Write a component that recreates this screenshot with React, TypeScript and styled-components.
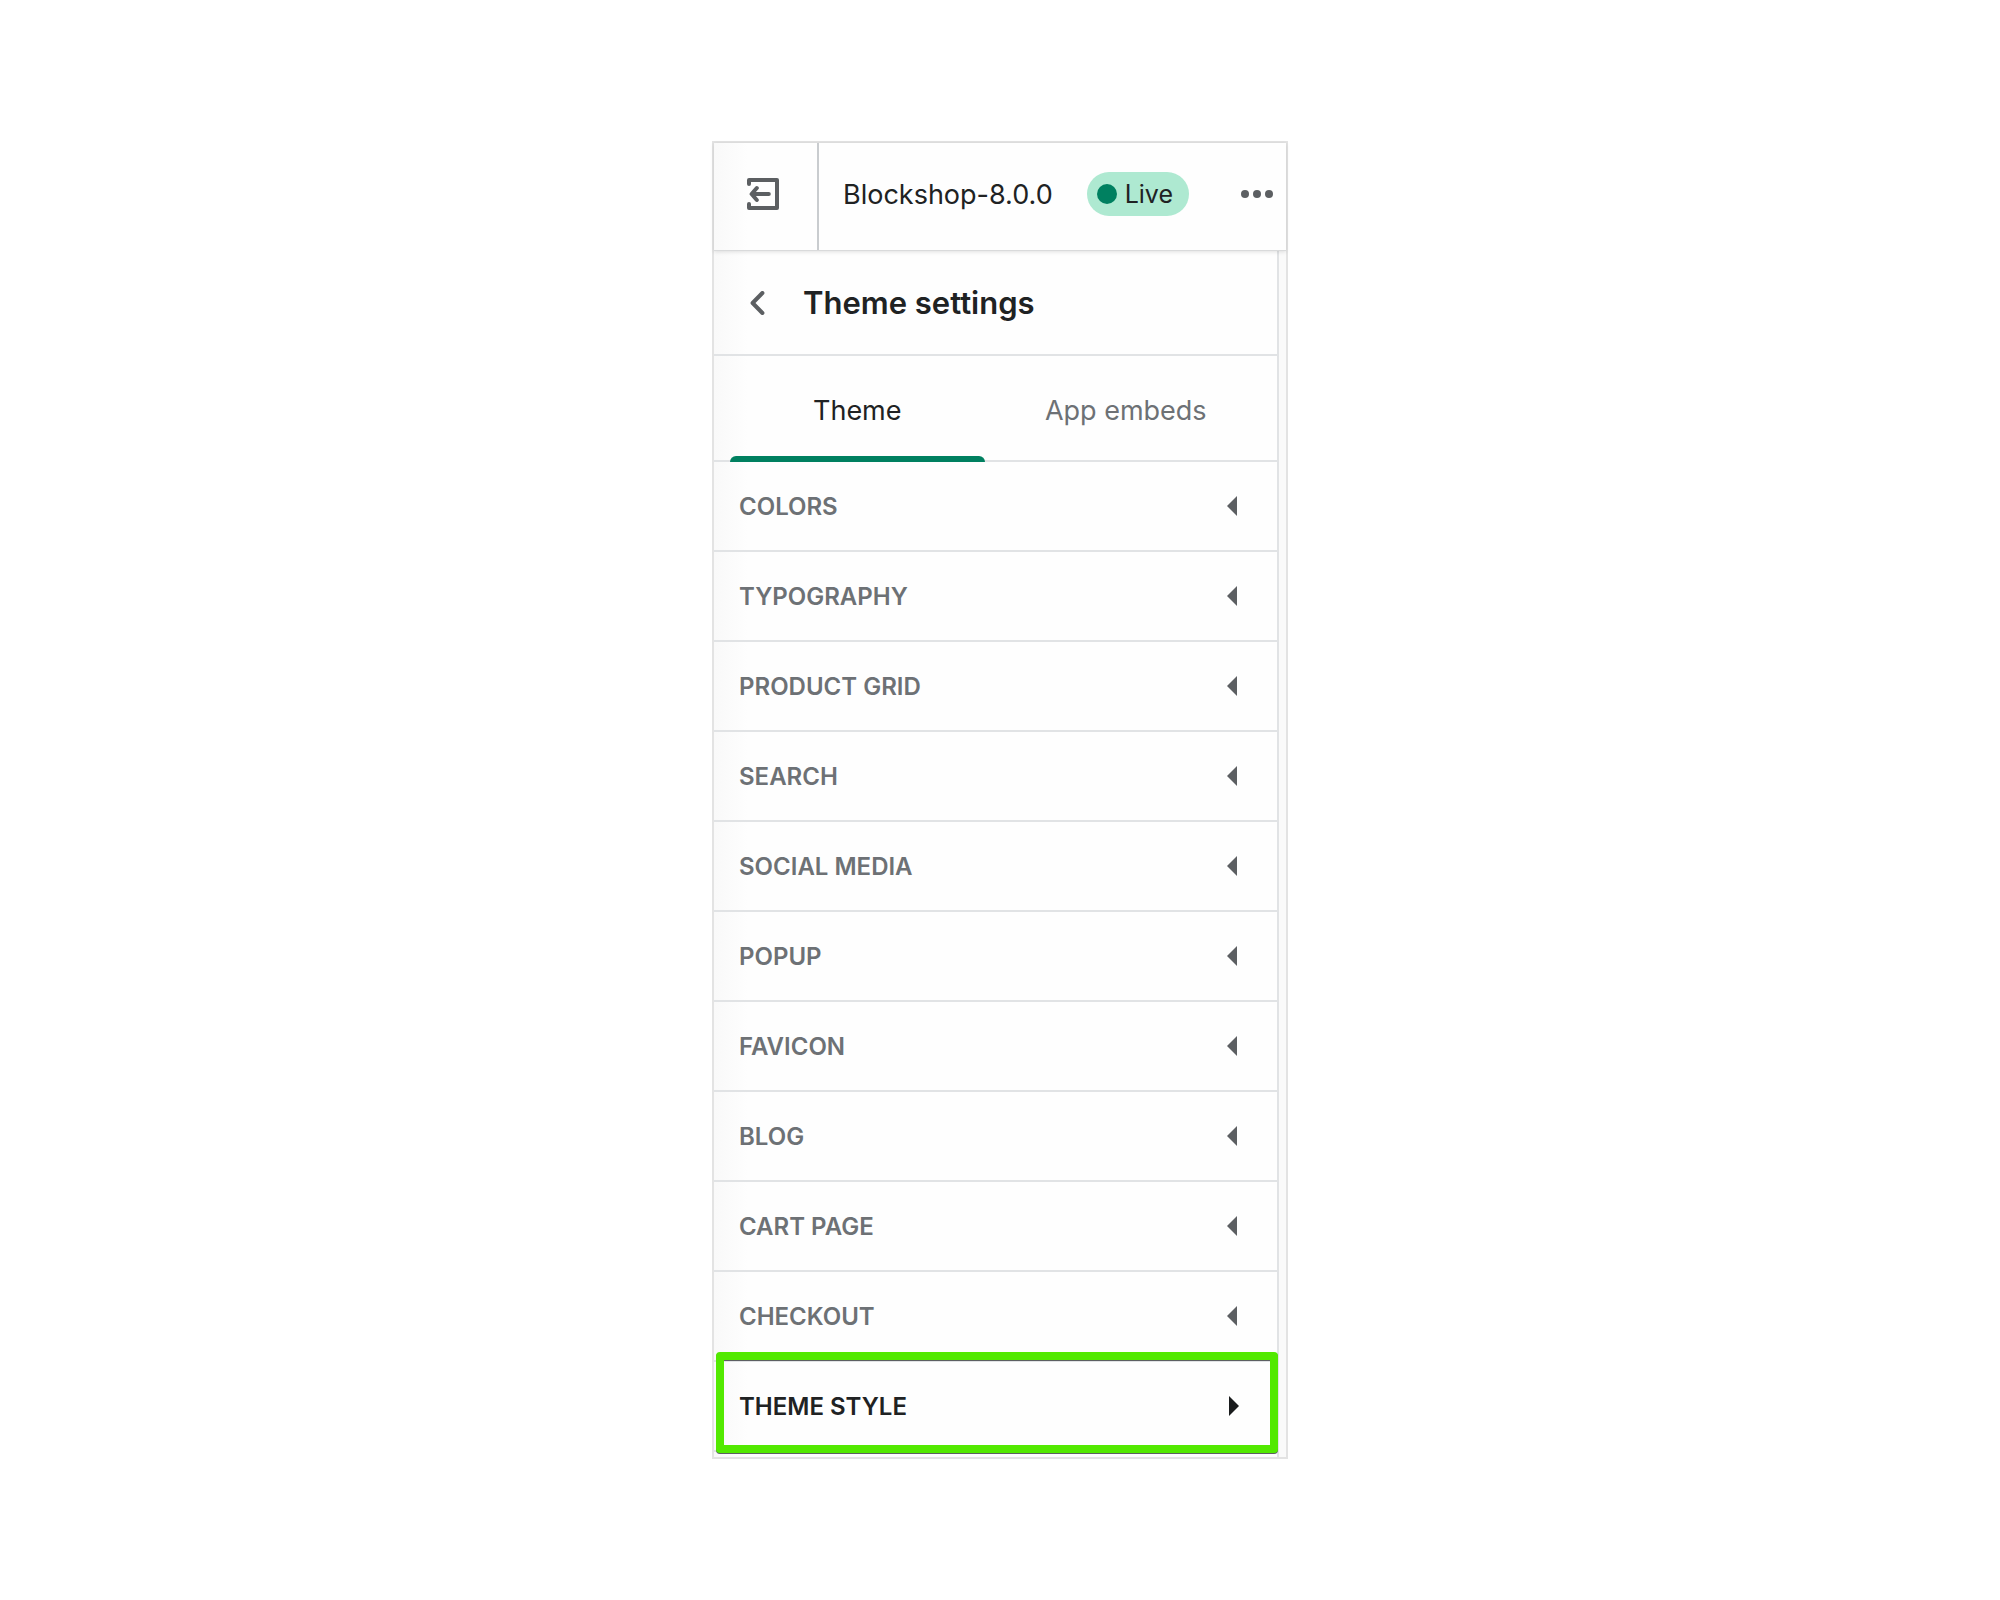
import React, { useState } from "react";
import styled, { createGlobalStyle } from "styled-components";

const color = {
  text: "#202223",
  subdued: "#6d7175",
  icon: "#5c5f62",
  line: "#e1e3e5",
  frame: "#e3e3e3",
  green: "#008060",
  badge: "#aee9d1",
  highlight: "#52e900",
};

const GlobalStyle = createGlobalStyle`
  *, *::before, *::after { box-sizing: border-box; }
  body {
    margin: 0;
    background: #fff;
    color: ${color.text};
    font-family: Inter, "Liberation Sans", sans-serif;
  }
  button {
    margin: 0;
    padding: 0;
    border: 0;
    background: none;
    color: inherit;
    font: inherit;
    cursor: pointer;
  }
  svg { display: block; }
`;

const Page = styled.main`
  min-height: 100vh;
  display: flex;
  align-items: center;
  justify-content: center;
`;

const Panel = styled.section`
  width: 100%;
  max-width: 576px;
  border: 2px solid ${color.frame};
  background: linear-gradient(to right, #f9f9f9, #fefefe 34px);
`;

const Header = styled.header`
  position: relative;
  display: flex;
  border-bottom: 1px solid #d9dadb;
  box-shadow: 0 1px 4px rgba(0, 0, 0, 0.12);
`;

const ExitButton = styled.button`
  flex: none;
  display: flex;
  width: 105px;
  padding: 35px 0 40px 33px;
  border-right: 2px solid #c9cccf;
`;

const HeaderBar = styled.div`
  flex: 1;
  min-width: 0;
  display: flex;
  align-items: center;
  padding: 0 13px 5px 24px;
`;

const ThemeName = styled.span`
  flex: 1;
  padding-top: 2px;
  font-size: 27px;
  line-height: 40px;
  white-space: nowrap;
`;

const Badge = styled.span`
  display: flex;
  align-items: center;
  gap: 8px;
  height: 44px;
  padding: 0 16px 0 10px;
  border-radius: 22px;
  background: ${color.badge};
  font-size: 25px;
  line-height: 32px;
`;

const Dot = styled.span`
  width: 20px;
  height: 20px;
  border-radius: 50%;
  background: ${color.green};
`;

const MoreButton = styled.button`
  margin-left: 52px;
  color: ${color.icon};
`;

const Body = styled.div`
  margin-right: 7px;
  border-right: 2px solid ${color.line};
  box-shadow: 7px 0 0 #fafafa;
`;

const TitleRow = styled.div`
  display: flex;
  align-items: center;
  gap: 37px;
  height: 105px;
  padding-left: 36px;
  border-bottom: 2px solid ${color.line};
`;

const BackButton = styled.button`
  color: ${color.icon};
`;

const Title = styled.h1`
  margin: 0;
  font-size: 31px;
  font-weight: 600;
  line-height: 40px;
`;

const Tabs = styled.div`
  display: flex;
  height: 106px;
  padding: 0 17px 0 9px;
  border-bottom: 2px solid ${color.line};
`;

const Tab = styled.button<{ $active: boolean }>`
  position: relative;
  flex: 1;
  height: 106px;
  padding-top: 2px;
  font-size: 27px;
  color: ${(p) => (p.$active ? color.text : color.subdued)};

  &::after {
    content: "";
    position: absolute;
    inset: auto 7px 0;
    height: 6px;
    border-radius: 6px 6px 0 0;
    background: ${(p) => (p.$active ? color.green : "transparent")};
  }
`;

const List = styled.ul`
  margin: 0;
  padding: 0 0 5px;
  list-style: none;
`;

const Item = styled.li<{ $highlight: boolean }>`
  position: relative;
  border-bottom: 2px solid ${color.line};

  &::after {
    content: "";
    display: ${(p) => (p.$highlight ? "block" : "none")};
    position: absolute;
    inset: -10px -1px -3px 2px;
    border: 8px solid ${color.highlight};
    border-radius: 4px;
    filter: drop-shadow(0 1px 0 ${color.icon});
    pointer-events: none;
  }
`;

const ItemButton = styled.button<{ $highlight: boolean }>`
  display: flex;
  align-items: center;
  justify-content: space-between;
  width: 100%;
  height: 88px;
  padding: 0 38px 0 25px;
  font-size: 24px;
  font-weight: 600;
  color: ${(p) => (p.$highlight ? color.text : color.subdued)};
`;

const ExitIcon = () => (
  <svg width="32" height="32" viewBox="0 0 32 32" fill="none" stroke={color.icon} strokeWidth="4" strokeLinecap="round" strokeLinejoin="round" aria-hidden="true">
    <path d="M2 6V2H30V30H2V26" />
    <path d="M21.8 16H5M9.8 10L4.6 16L9.8 22" />
  </svg>
);

const BackIcon = () => (
  <svg width="16" height="24" viewBox="0 0 16 24" fill="none" stroke="currentColor" strokeWidth="4" strokeLinecap="round" strokeLinejoin="round" aria-hidden="true">
    <path d="M12.4 2L2.6 12L12.4 22" />
  </svg>
);

const MoreIcon = () => (
  <svg width="32" height="8" viewBox="0 0 32 8" fill="currentColor" aria-hidden="true">
    <circle cx="4" cy="4" r="4" />
    <circle cx="16" cy="4" r="4" />
    <circle cx="28" cy="4" r="4" />
  </svg>
);

const Caret = ({ right }: { right: boolean }) => (
  <svg width="12" height="20" viewBox="0 0 12 20" aria-hidden="true">
    {right ? <path d="M2 0L12 10L2 20Z" fill="#1a1c1d" /> : <path d="M10 0L0 10L10 20Z" fill={color.icon} />}
  </svg>
);

const tabs = ["Theme", "App embeds"];

const sections = [
  "COLORS",
  "TYPOGRAPHY",
  "PRODUCT GRID",
  "SEARCH",
  "SOCIAL MEDIA",
  "POPUP",
  "FAVICON",
  "BLOG",
  "CART PAGE",
  "CHECKOUT",
  "THEME STYLE",
];

export default function App() {
  const [activeTab, setActiveTab] = useState("Theme");
  const [selected, setSelected] = useState("THEME STYLE");

  return (
    <>
      <GlobalStyle />
      <Page>
        <Panel>
          <Header>
            <ExitButton aria-label="Exit">
              <ExitIcon />
            </ExitButton>
            <HeaderBar>
              <ThemeName>Blockshop-8.0.0</ThemeName>
              <Badge>
                <Dot />
                Live
              </Badge>
              <MoreButton aria-label="More actions">
                <MoreIcon />
              </MoreButton>
            </HeaderBar>
          </Header>
          <Body>
            <TitleRow>
              <BackButton aria-label="Back">
                <BackIcon />
              </BackButton>
              <Title>Theme settings</Title>
            </TitleRow>
            <Tabs role="tablist">
              {tabs.map((tab) => (
                <Tab key={tab} role="tab" aria-selected={tab === activeTab} $active={tab === activeTab} onClick={() => setActiveTab(tab)}>
                  {tab}
                </Tab>
              ))}
            </Tabs>
            <List>
              {sections.map((name) => (
                <Item key={name} $highlight={name === selected}>
                  <ItemButton $highlight={name === selected} onClick={() => setSelected(name)}>
                    {name}
                    <Caret right={name === selected} />
                  </ItemButton>
                </Item>
              ))}
            </List>
          </Body>
        </Panel>
      </Page>
    </>
  );
}
